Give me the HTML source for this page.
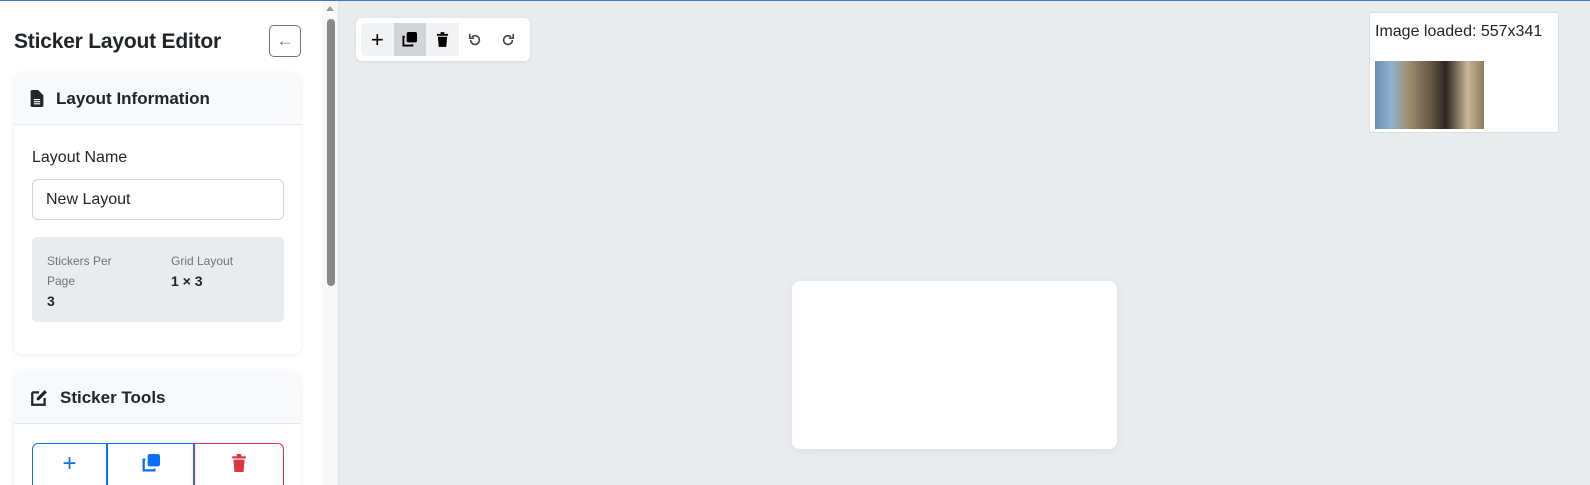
<!DOCTYPE html>
<html><head><meta charset="utf-8"><style>
*{box-sizing:border-box;margin:0;padding:0}
html,body{width:1590px;height:485px;overflow:hidden}
body{background:#e9ecef;font-family:"Liberation Sans","DejaVu Sans",sans-serif;color:#212529;position:relative}
.top{position:absolute;left:0;top:0;width:1590px;height:1px;background:#3a78c9}
.side{position:absolute;left:0;top:1px;width:322px;height:484px;background:#fff;overflow:hidden}
.sb{position:absolute;left:322px;top:1px;width:17px;height:484px;background:#f8f8f8;border-right:1px solid #dee2e6}
.thumb{position:absolute;left:327px;top:19px;width:8px;height:267px;background:#888;border-radius:4px}
.arr{position:absolute;left:326px;top:6px;width:0;height:0;border-left:4px solid transparent;border-right:4px solid transparent;border-bottom:5px solid #999}
h1{position:absolute;left:14px;top:29px;font-size:21px;font-weight:600;color:#212529;letter-spacing:-0.2px}
.back{position:absolute;left:269px;top:24px;width:32px;height:32px;border:1px solid #6c757d;border-radius:5px;color:#6c757d;text-align:center;line-height:29px;font-size:17px}
.card{position:absolute;left:14px;width:287px;background:#fff;border-radius:8px;box-shadow:0 1px 6px rgba(0,0,0,.08)}
.ch{height:52px;background:#f8f9fa;border-bottom:1px solid #e5e7ea;border-radius:8px 8px 0 0;display:flex;align-items:center;padding-left:16px;font-size:17px;font-weight:600}
.ch svg{margin-right:12px}
label{position:absolute;left:18px;top:76px;font-size:16px}
.inp{position:absolute;left:18px;top:106px;width:252px;height:41px;border:1px solid #ced4da;border-radius:6px;padding:0 13px;line-height:39px;font-size:16px}
.info{position:absolute;left:18px;top:164px;width:252px;height:85px;background:#e9ecef;border-radius:5px;font-size:12px;color:#6c757d}
.info b{color:#212529;font-size:14px}
.tb{position:absolute;left:356px;top:18px;width:174px;height:43px;background:#fff;border-radius:6px;box-shadow:0 1px 4px rgba(0,0,0,.08)}
.tbin{position:absolute;left:5px;top:5px;height:33px;width:163px;background:#f1f3f5;border-radius:4px;display:flex}
.tbin div{width:33px;height:33px;display:flex;align-items:center;justify-content:center}
.canvas{position:absolute;left:792px;top:281px;width:325px;height:168px;background:#fff;border-radius:8px;box-shadow:0 2px 10px rgba(0,0,0,.06)}
.imgbox{position:absolute;left:1369px;top:12px;width:190px;height:121px;background:#fff;border:1px solid #ddd}
.imgbox p{position:absolute;left:5px;top:10px;font-size:16px;white-space:nowrap}
.photo{position:absolute;left:5px;top:48px;width:109px;height:68px;background:linear-gradient(90deg,#6a8fb0 0,#8fb3d3 15%,#a09070 30%,#6b5a45 50%,#2d2620 65%,#c9b89a 85%,#8a7a5a 100%)}
.btns{position:absolute;left:18px;top:71px;width:252px;height:50px;display:flex}
</style></head><body>
<div class="top"></div>
<div class="side">
<h1>Sticker Layout Editor</h1>
<div class="back">&#8592;</div>
<div class="card" style="top:72px;height:281px">
 <div class="ch"><svg width="14" height="17" viewBox="0 0 12 16"><path d="M0 1.5A1.5 1.5 0 0 1 1.5 0H7l5 5v9.5A1.5 1.5 0 0 1 10.5 16h-9A1.5 1.5 0 0 1 0 14.5z" fill="#212529"/><path d="M3 9h6M3 11h6M3 13h6" stroke="#fff" stroke-width="1"/></svg>Layout Information</div>
 <label>Layout Name</label>
 <div class="inp">New Layout</div>
 <div class="info">
  <div style="position:absolute;left:15px;top:14px;line-height:20px">Stickers Per<br>Page<br><b>3</b></div>
  <div style="position:absolute;left:139px;top:14px;line-height:20px">Grid Layout<br><b>1 × 3</b></div>
 </div>
</div>
<div class="card" style="top:371px;height:130px">
 <div class="ch"><svg width="18" height="18" viewBox="0 0 16 16"><path d="M2 3h6M2 3v11h11V8" stroke="#212529" stroke-width="2" fill="none"/><path d="M13 1l2 2-7 7H6V8z" fill="#212529"/></svg>Sticker Tools</div>
 <div class="btns">
  <div style="width:75px;border:1px solid #0d6efd;border-radius:6px 0 0 0;color:#0d6efd;text-align:center;font-size:24px;line-height:40px">+</div>
  <div style="width:87px;border:1px solid #0d6efd;display:flex;justify-content:center;padding-top:10px"><svg width="18" height="18" viewBox="0 0 16 16"><rect x="5" y="0" width="11" height="11" rx="2" fill="#0d6efd"/><path d="M3 5H1.5v9.5h9.5V13" stroke="#0d6efd" stroke-width="2" fill="none"/></svg></div>
  <div style="width:90px;border:1px solid #dc3545;border-radius:0 6px 0 0;display:flex;justify-content:center;padding-top:10px"><svg width="16" height="18" viewBox="0 0 14 16"><path d="M1 2h12v2H1zM5 0h4v2H5z" fill="#dc3545"/><path d="M2 5h10l-1 11H3z" fill="#dc3545"/></svg></div>
 </div>
</div>
</div>
<div class="sb"></div><div class="arr"></div><div class="thumb"></div>
<div class="tb"><div class="tbin">
 <div style="font-size:22px;color:#000">+</div>
 <div style="background:#d3d5d8"><svg width="15" height="15" viewBox="0 0 16 16"><rect x="5" y="0" width="11" height="11" rx="2" fill="#000"/><path d="M3 5H1.5v9.5h9.5V13" stroke="#000" stroke-width="2" fill="none"/></svg></div>
 <div><svg width="13" height="15" viewBox="0 0 14 16"><path d="M1 2h12v2H1zM5 0h4v2H5z" fill="#000"/><path d="M2 5h10l-1 11H3z" fill="#000"/></svg></div>
 <div style="background:#fff"><svg width="14" height="14" viewBox="0 0 16 16"><path d="M3 8a5 5 0 1 0 1.5-3.5" stroke="#444" stroke-width="1.8" fill="none"/><path d="M2 1v5h5" stroke="#444" stroke-width="1.8" fill="none"/></svg></div>
 <div style="background:#fff"><svg width="14" height="14" viewBox="0 0 16 16"><path d="M13 8a5 5 0 1 1-1.5-3.5" stroke="#444" stroke-width="1.8" fill="none"/><path d="M14 1v5H9" stroke="#444" stroke-width="1.8" fill="none"/></svg></div>
</div></div>
<div class="canvas"></div>
<div class="imgbox"><p>Image loaded: 557x341</p><div class="photo"></div></div>
</body></html>
